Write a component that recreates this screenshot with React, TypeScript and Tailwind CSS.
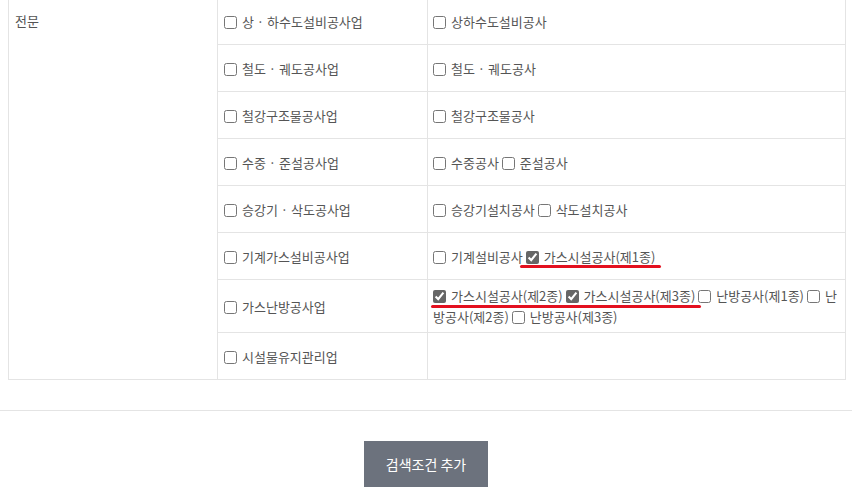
import React from 'react';

type Item = { label: string; checked?: boolean };

const rows: { left: string; right: Item[]; marks?: number[][]; tall?: boolean }[] = [
  { left: '상 · 하수도설비공사업', right: [{ label: '상하수도설비공사' }] },
  { left: '철도 · 궤도공사업', right: [{ label: '철도 · 궤도공사' }] },
  { left: '철강구조물공사업', right: [{ label: '철강구조물공사' }] },
  { left: '수중 · 준설공사업', right: [{ label: '수중공사' }, { label: '준설공사' }] },
  { left: '승강기 · 삭도공사업', right: [{ label: '승강기설치공사' }, { label: '삭도설치공사' }] },
  { left: '기계가스설비공사업', right: [{ label: '기계설비공사' }, { label: '가스시설공사(제1종)', checked: true }] },
  {
    left: '가스난방공사업',
    right: [
      { label: '가스시설공사(제2종)', checked: true },
      { label: '가스시설공사(제3종)', checked: true },
      { label: '난방공사(제1종)' },
      { label: '난방공사(제2종)' },
      { label: '난방공사(제3종)' },
    ],
  },
  { left: '시설물유지관리업', right: [] },
];

const Check: React.FC<{ label: string; checked?: boolean }> = ({ label, checked }) => (
  <>
    <input
      type="checkbox"
      defaultChecked={checked}
      className="w-[13px] h-[13px] align-[-2px] accent-[#666666]"
    />
    <span className="ml-[5px]">{label}</span>
  </>
);

const Underline: React.FC<{ className: string }> = ({ className }) => (
  <span className={`absolute h-[3px] rounded-full bg-[#e3101f] ${className}`} />
);

export default function App() {
  return (
    <div className="bg-white text-[13px] leading-[21px] text-[#555555] font-['Noto_Sans_CJK_KR','Noto_Sans',sans-serif] w-[852px] h-[491px] overflow-hidden">
      <div className="ml-2 mr-[6px] -mt-[3px]">
        <table className="w-full border-collapse table-fixed">
          <colgroup>
            <col className="w-[209px]" />
            <col className="w-[210px]" />
            <col />
          </colgroup>
          <tbody>
            {rows.map((r, i) => (
              <tr key={i}>
                {i === 0 && (
                  <td rowSpan={rows.length} className="border border-[#e4e4e4] align-top pl-[6px] pt-[12px]">
                    전문
                  </td>
                )}
                <td className="border border-[#e4e4e4] h-[47px] px-[6px] py-[5px] align-middle">
                  <Check label={r.left} />
                </td>
                <td className="border border-[#e4e4e4] h-[47px] pl-[5px] pr-[6px] py-[5px] align-middle">
                  {i === 5 ? (
                    <>
                      <Check label="기계설비공사" />{' '}
                      <span className="relative">
                        <Check label="가스시설공사(제1종)" checked />
                        <Underline className="-left-[6px] -right-[6px] bottom-[-2px]" />
                      </span>
                    </>
                  ) : i === 6 ? (
                    <>
                      <span className="relative">
                        <Check label="가스시설공사(제2종)" checked />{' '}
                        <Check label="가스시설공사(제3종)" checked />
                        <Underline className="-left-[2px] -right-[6px] bottom-[-3px]" />
                      </span>{' '}
                      <Check label="난방공사(제1종)" /> <Check label="난방공사(제2종)" />{' '}
                      <Check label="난방공사(제3종)" />
                    </>
                  ) : (
                    r.right.map((it, k) => (
                      <React.Fragment key={k}>
                        {k > 0 && ' '}
                        <Check label={it.label} checked={it.checked} />
                      </React.Fragment>
                    ))
                  )}
                </td>
              </tr>
            ))}
          </tbody>
        </table>
      </div>
      <div className="mt-[30px] border-t border-[#e4e4e4]" />
      <div className="flex justify-center pt-[30px]">
        <button className="w-[124px] h-[46px] bg-[#6c727d] text-white text-[14px]">검색조건 추가</button>
      </div>
    </div>
  );
}
